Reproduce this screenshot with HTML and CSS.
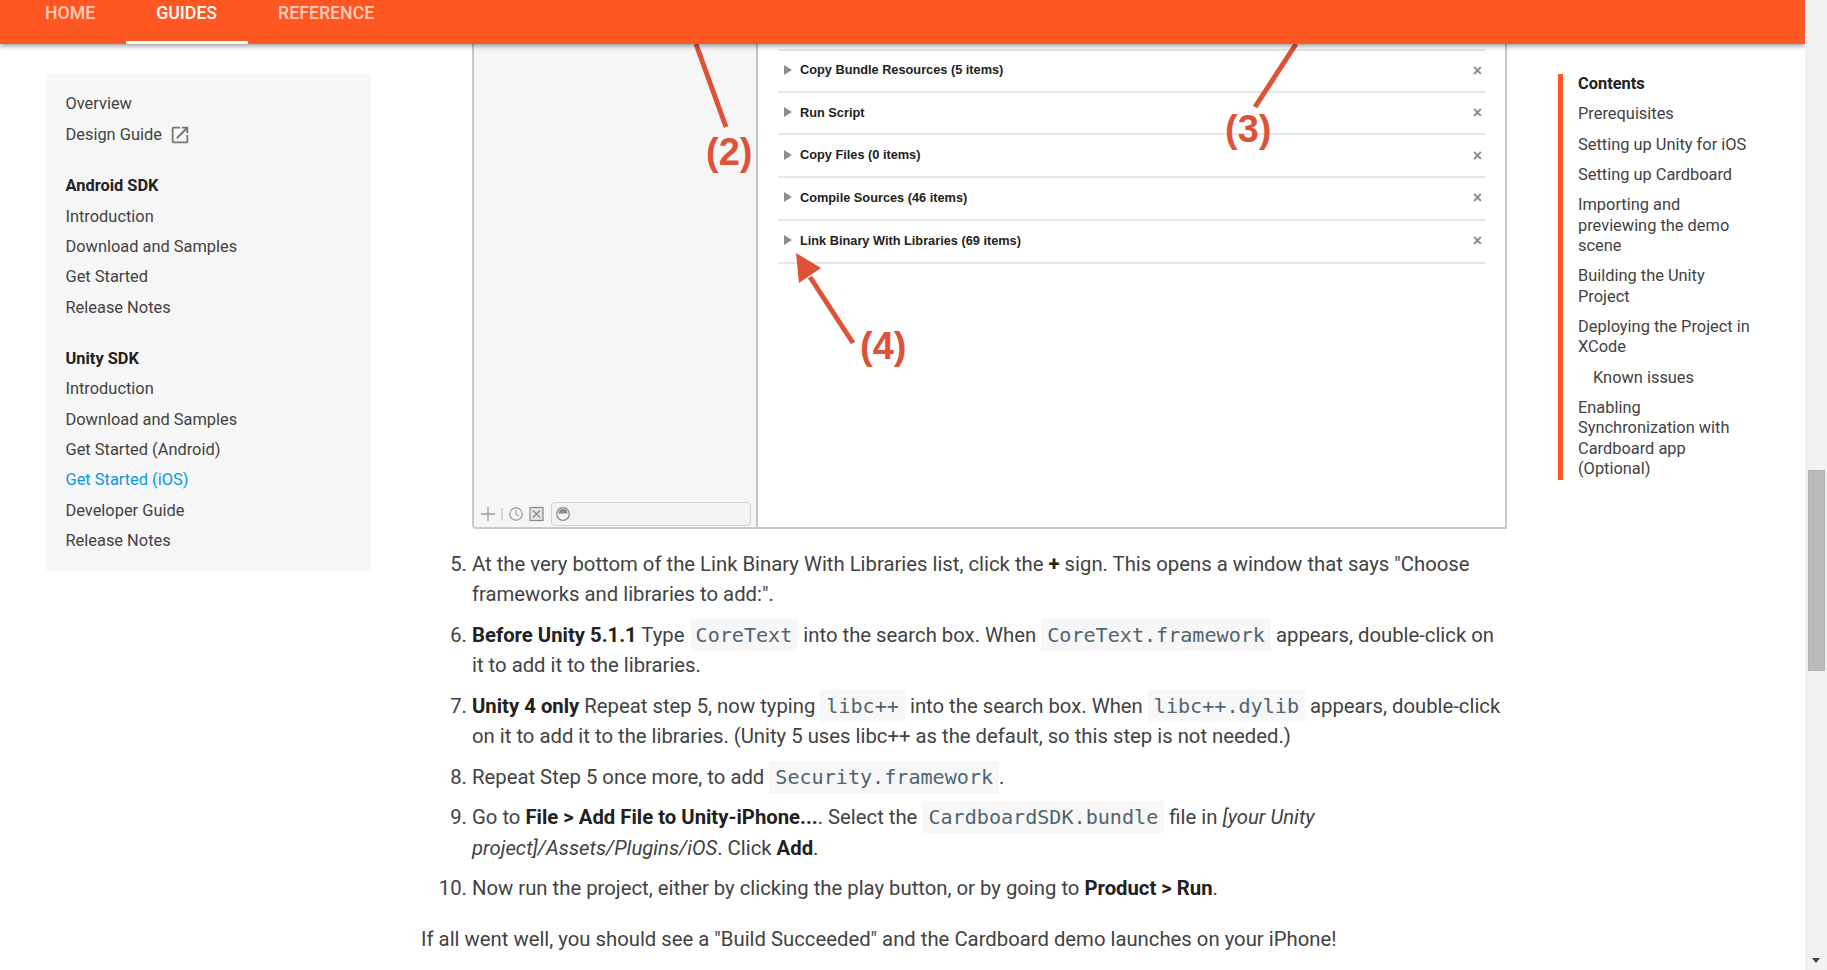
FILE: index.html
```html
<!DOCTYPE html>
<html lang="en">
<head>
<meta charset="utf-8">
<title>Get Started (iOS)</title>
<link rel="stylesheet" href="styles.css">
</head>
<body>
<div class="window">
  <div class="page">
    <header class="topbar">
      <nav class="tabs">
        <a class="tab">HOME</a>
        <a class="tab tab-active">GUIDES</a>
        <a class="tab">REFERENCE</a>
      </nav>
    </header>
    <div class="columns">
      <aside class="sidenav">
        <ul class="navgroup">
          <li>Overview</li>
          <li class="with-icon">Design Guide
            <svg class="ext" viewBox="0 0 24 24"><path d="M19 19H5V5h7V3H5c-1.11 0-2 .9-2 2v14c0 1.1.89 2 2 2h14c1.1 0 2-.9 2-2v-7h-2v7zM14 3v2h3.59l-9.83 9.83 1.41 1.41L19 6.41V10h2V3h-7z"/></svg>
          </li>
        </ul>
        <ul class="navgroup">
          <li class="navhead">Android SDK</li>
          <li>Introduction</li>
          <li>Download and Samples</li>
          <li>Get Started</li>
          <li>Release Notes</li>
        </ul>
        <ul class="navgroup">
          <li class="navhead">Unity SDK</li>
          <li>Introduction</li>
          <li>Download and Samples</li>
          <li>Get Started (Android)</li>
          <li class="nav-active">Get Started (iOS)</li>
          <li>Developer Guide</li>
          <li>Release Notes</li>
        </ul>
      </aside>

      <main class="article">
        <div class="shot">
          <div class="shot-pane">
            <div class="shot-tools">
              <svg class="tool-icons" viewBox="0 0 68 20">
                <path d="M3 10h14M10 3v14" fill="none" stroke="#9a9a9a" stroke-width="1.3"/>
                <path d="M24 4v12" stroke="#c4c4c4" stroke-width="1.3"/>
                <circle cx="38" cy="10" r="6.2" fill="none" stroke="#999" stroke-width="1.2"/>
                <path d="M38 6v4.4l3 1.4" fill="none" stroke="#999" stroke-width="1.1"/>
                <rect x="52" y="3.5" width="13" height="13" fill="#e6e6e6" stroke="#888" stroke-width="1.2"/>
                <path d="M55 6.500l7 7M62 6.500l-7 7" stroke="#888" stroke-width="1.2"/>
              </svg>
              <div class="shot-search">
                <svg class="filter-icon" viewBox="0 0 16 16">
                  <circle cx="8" cy="8" r="6.300" fill="none" stroke="#888" stroke-width="1.200"/>
                  <path d="M3.500 7.500a4.500 4.500 0 0 1 9 0z" fill="#888"/>
                </svg>
              </div>
            </div>
          </div>
          <div class="shot-main">
            <div class="phase phase-first"><span class="tri"></span><span class="phase-name">Copy Bundle Resources (5 items)</span><span class="phase-x">×</span></div>
            <div class="phase"><span class="tri"></span><span class="phase-name">Run Script</span><span class="phase-x">×</span></div>
            <div class="phase"><span class="tri"></span><span class="phase-name">Copy Files (0 items)</span><span class="phase-x">×</span></div>
            <div class="phase"><span class="tri"></span><span class="phase-name">Compile Sources (46 items)</span><span class="phase-x">×</span></div>
            <div class="phase"><span class="tri"></span><span class="phase-name">Link Binary With Libraries (69 items)</span><span class="phase-x">×</span></div>
          </div>
          <svg class="marks" viewBox="0 0 1036 530">
            <path d="M224 44L254 127" stroke="#de5237" stroke-width="5" fill="none"/>
            <path d="M824 44L783 107" stroke="#de5237" stroke-width="5" fill="none"/>
            <path d="M381 343L338 277" stroke="#de5237" stroke-width="5" fill="none"/>
            <path d="M324 253L349 268L327 283z" fill="#de5237"/>
          </svg>
          <span class="callout callout-2">(2)</span>
          <span class="callout callout-3">(3)</span>
          <span class="callout callout-4">(4)</span>
        </div>

        <ol class="steps" start="5">
          <li>At the very bottom of the Link Binary With Libraries list, click the <strong>+</strong> sign. This opens a window that says "Choose frameworks and libraries to add:".</li>
          <li><strong>Before Unity 5.1.1</strong> Type <code>CoreText</code> into the search box. When <code>CoreText.framework</code> appears, double-click on it to add it to the libraries.</li>
          <li><strong>Unity 4 only</strong> Repeat step 5, now typing <code>libc++</code> into the search box. When <code>libc++.dylib</code> appears, double-click on it to add it to the libraries. (Unity 5 uses libc++ as the default, so this step is not needed.)</li>
          <li>Repeat Step 5 once more, to add <code>Security.framework</code>.</li>
          <li>Go to <strong>File &gt; Add File to Unity-iPhone...</strong>. Select the <code>CardboardSDK.bundle</code> file in <em>[your Unity project]/Assets/Plugins/iOS</em>. Click <strong>Add</strong>.</li>
          <li>Now run the project, either by clicking the play button, or by going to <strong>Product &gt; Run</strong>.</li>
        </ol>
        <p class="closing">If all went well, you should see a "Build Succeeded" and the Cardboard demo launches on your iPhone!</p>
      </main>

      <aside class="toc">
        <div class="toc-head">Contents</div>
        <ul class="toc-list">
          <li>Prerequisites</li>
          <li>Setting up Unity for iOS</li>
          <li>Setting up Cardboard</li>
          <li>Importing and previewing the demo scene</li>
          <li>Building the Unity Project</li>
          <li>Deploying the Project in XCode</li>
          <li class="toc-sub">Known issues</li>
          <li>Enabling Synchronization with Cardboard app (Optional)</li>
        </ul>
      </aside>
    </div>
  </div>
  <div class="scrollbar">
    <div class="thumb"></div>
    <div class="arrow-down"></div>
  </div>
</div>
</body>
</html>
```

FILE: styles.css
```css
* { box-sizing: border-box; }
html, body { margin: 0; padding: 0; height: 970px; overflow: hidden; }
body { font-family: Roboto, "Noto Sans", sans-serif; color: #424242; background: #fff; }
ul, ol { margin: 0; padding: 0; list-style: none; }

.window { display: flex; width: 1827px; height: 970px; }
.page { position: relative; width: 1805px; height: 970px; overflow: hidden; }

.topbar { position: absolute; top: 0; left: 0; right: 0; height: 44px; background: #ff5722; box-shadow: 0 2px 5px rgba(0,0,0,.4); z-index: 5; }
.tabs { display: flex; padding-left: 14.500px; height: 44px; }
.tab { padding: 0 30.500px; height: 44px; font-size: 17.7px; font-weight: 500; line-height: 26px; color: rgba(255,255,255,.7); }
.tab-active { color: #fff; border-bottom: 3px solid #fff; }

.columns { display: flex; align-items: flex-start; padding-left: 46px; }

.sidenav { width: 325px; margin-top: 74px; padding: 15px 19.500px 15px; background: #f7f7f7; font-size: 16.4px; line-height: 20.33px; flex: none; }
.navgroup li { padding: 5px 0; }
.navgroup + .navgroup { margin-top: 20px; }
.navgroup + .navgroup + .navgroup { margin-top: 21px; }
.navhead { font-weight: 700; color: #212121; }
.nav-active { color: #039be5; }
.with-icon { display: flex; align-items: center; }
.ext { width: 22px; height: 22px; margin-left: 7px; fill: #757575; }

.article { width: 1086px; margin-left: 50px; flex: none; font-size: 20.3px; line-height: 30.33px; }

.shot { position: relative; display: flex; margin-left: 51px; width: 1035px; height: 529px; border: 2px solid #c9c9c9; border-top: 0; border-radius: 0 0 0 4px; }
.shot-pane { display: flex; flex-direction: column; justify-content: flex-end; width: 284px; background: #f6f6f6; border-right: 2px solid #c4c4c4; padding: 0 5px 1px 2px; flex: none; }
.shot-tools { display: flex; align-items: center; }
.tool-icons { width: 68px; height: 20px; margin-left: 2px; }
.shot-search { display: flex; align-items: center; width: 200px; height: 24px; margin-left: 5px; padding-left: 3px; background: #f3f3f3; border: 1.5px solid #d2d2d2; border-radius: 4px; }
.filter-icon { width: 16px; height: 16px; }

.shot-main { flex: 1; padding: 48.500px 20px 0 20px; }
.phase { display: flex; align-items: center; height: 42.75px; border-bottom: 2px solid #e6e6e6; font-family: "Liberation Sans", Arial, sans-serif; font-size: 12.75px; font-weight: 700; color: #222; padding-right: 3px; }
.phase-first { height: 44px; border-top: 2px solid #e6e6e6; }
.tri { width: 0; height: 0; border-left: 8px solid #8c8c8c; border-top: 5px solid transparent; border-bottom: 5px solid transparent; margin: -2px 8px 0 6px; }
.phase-name { flex: 1; }
.phase-x { font-size: 16px; font-weight: 700; color: #8a8a8a; line-height: 1; }

.marks { position: absolute; left: -2px; top: 0; width: 1036px; height: 530px; pointer-events: none; }
.callout { position: absolute; font-family: "Liberation Sans", Arial, sans-serif; font-weight: 700; font-size: 38px; line-height: 40px; color: #de5237; }
.callout-2 { left: 232px; top: 132px; }
.callout-3 { left: 751px; top: 109px; }
.callout-4 { left: 386px; top: 325.5px; }

.steps { margin-top: 19.500px; padding-left: 51px; list-style: decimal; }
.steps li { margin-bottom: 10.4px; padding-left: 0; }
.steps strong { font-weight: 700; color: #212121; }
code { font-family: "DejaVu Sans Mono", "Liberation Mono", monospace; font-size: 20.1px; line-height: 1; color: #4f6472; background: #f7f7f7; padding: 4px 6px; }
.closing { margin: 20px 0 0; }

.toc { width: 200px; margin-left: 51px; margin-top: 74px; padding-left: 15px; border-left: 5px solid #ff5722; font-size: 16.4px; line-height: 20.33px; flex: none; height: 406px; }
.toc-head { padding-bottom: 5px; font-weight: 700; color: #212121; }
.toc-list li { padding: 5px 0; width: 180px; }
.toc-list .toc-sub { padding-left: 15px; }

.scrollbar { position: relative; width: 22px; height: 970px; background: #f1f1f1; padding: 470px 2px 0 3px; flex: none; }
.thumb { height: 201px; background: #bbb; border: 1px solid #b2b2b2; }
.arrow-down { position: absolute; left: 7px; bottom: 7px; width: 0; height: 0; border-top: 5px solid #444; border-left: 4.5px solid transparent; border-right: 4.5px solid transparent; }
```
